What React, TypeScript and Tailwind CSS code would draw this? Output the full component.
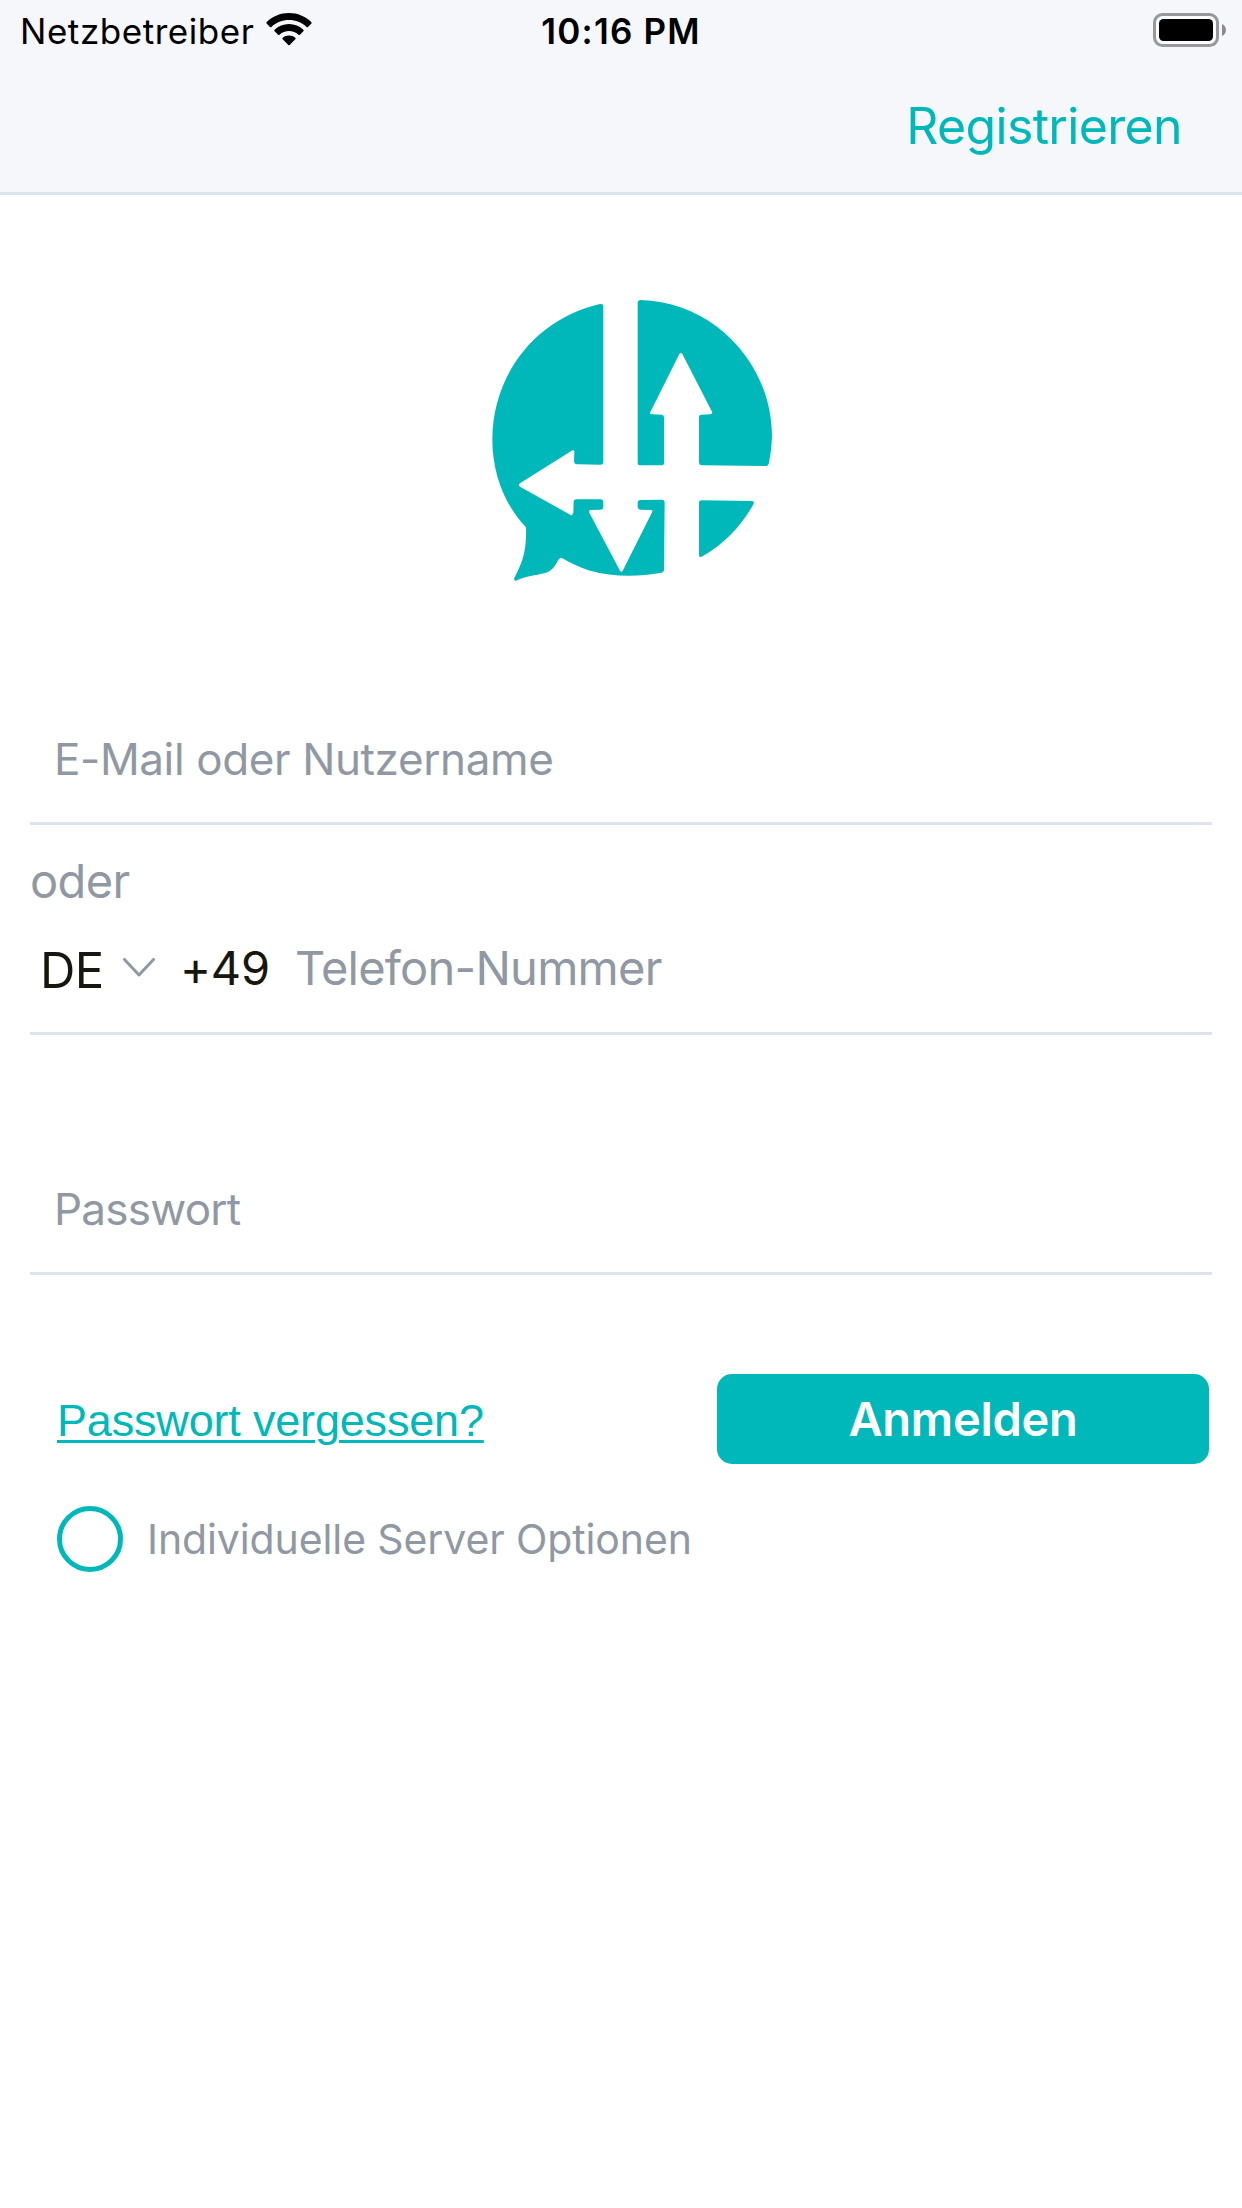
function WifiIcon() {
  return (
    <svg viewBox="0 0 46 33" className="h-[33px] w-[46px]" fill="#000">
      <path d="M23 0C31.6 0 39.6 3.3 45.4 9.2Q46 9.900 45.4 10.5L42 14Q41.300 14.600 40.600 14C35.800 9.600 29.700 7.100 23 7.100S10.200 9.600 5.400 14Q4.700 14.600 4 14L0.6 10.500Q0 9.900 0.6 9.200C6.400 3.300 14.400 0 23 0Z" />
      <path d="M23 11C28.600 11 33.600 13.100 37.400 16.800Q38.100 17.500 37.400 18.200L33.900 21.800Q33.200 22.400 32.500 21.800C29.800 19.400 26.600 18.100 23 18.100S16.200 19.400 13.500 21.800Q12.800 22.400 12.100 21.800L8.600 18.200Q7.900 17.500 8.600 16.800C12.400 13.100 17.400 11 23 11Z" />
      <path d="M23 22.500C25.500 22.500 27.600 23.300 29.300 24.800Q30 25.500 29.300 26.200L23.700 31.900Q23 32.600 22.300 31.900L16.700 26.200Q16 25.500 16.700 24.800C18.400 23.300 20.500 22.500 23 22.500Z" />
    </svg>
  );
}

function BatteryIcon() {
  return (
    <svg viewBox="0 0 74 34" className="h-[34px] w-[74px]">
      <rect x="1.500" y="1.500" width="63" height="31" rx="8" fill="#fafbfd" stroke="#98989b" strokeWidth="3" />
      <rect x="6" y="6" width="54" height="22" rx="4.500" fill="#000" />
      <path d="M69 11C74.300 13 74.300 21 69 23Z" fill="#8c8c8f" />
    </svg>
  );
}

function Logo() {
  return (
    <svg viewBox="0 0 900 900" className="h-[300px] w-[300px]" fill="#00b8ba">
      <path d="M360 42Q370 40 370 50V515Q370 524 361 524L290 523Q282 522 282 513L283 484Q281 479 275 482L120 580Q114 585 120 590L272 675Q280 678 280 667L281 634Q282 628 289 628L362 628Q370 629 370 637V650Q370 659 361 659L331 660Q325 661 328 668L420 842Q424 848 428 842L517 665Q519 660 511 660L482 659Q473 658 473 650V636Q474 630 482 630L546 629Q554 630 554 638L552 840Q552 847 544 848C470 862 395 860 330 842C298 832 272 819 247 805Q241 802 237 807C228 820 220 844 193 850C165 857 140 858 108 872Q101 873 103 864C122 825 140 795 138 715Q138 711 134 707C80 650 37 560 37 448C38 250 170 85 360 42Z" />
      <path d="M473 38Q473 30 482 30C700 35 876 220 876 440Q875 480 867 518Q865 528 856 528L664 526Q657 525 657 518V381Q657 374 665 374L690 373Q699 372 696 365L607 192Q603 186 598 192L511 366Q508 372 516 373L545 374Q552 375 552 382V518Q552 526 544 526H482Q473 526 473 518Z" />
      <path d="M657 638Q657 631 665 631L816 633Q824 634 821 641C785 707 730 765 665 800Q657 803 657 795Z" />
    </svg>
  );
}

export default function App() {
  return (
    <div className="flex h-[2208px] w-[1242px] flex-col overflow-hidden bg-white font-['Inter','Liberation_Sans',sans-serif] whitespace-nowrap">
      <header className="border-b-[3px] border-[#dde4ee] bg-[#f6f7fb]">
        <div className="grid h-[63px] grid-cols-3 items-center text-[35px] leading-[63px] text-black">
          <div className="flex items-center gap-[12px] pl-[20px]">
            <span className="tracking-[0.55px]">Netzbetreiber</span>
            <div className="pb-[4px]">
              <WifiIcon />
            </div>
          </div>
          <span className="text-center font-semibold tracking-[1.2px]">10:16 PM</span>
          <div className="flex justify-end pr-[15px] pb-[3px]">
            <BatteryIcon />
          </div>
        </div>
        <nav className="flex h-[129px] items-center justify-end pr-[60px] pb-[3px]">
          <a className="text-[50px] leading-[60px] tracking-[-0.65px] text-[#00b8ba]">Registrieren</a>
        </nav>
      </header>

      <main className="flex flex-col pr-[30px] pl-[30px]">
        <div className="mt-[95px] flex pl-[450px]">
          <Logo />
        </div>

        <div className="mt-[106px] flex h-[129px] items-center border-b-[3px] border-[#dde4ef] pl-[24px] text-[44px] tracking-[-0.38px] text-[#9098a4]">
          E-Mail oder Nutzername
        </div>

        <div className="flex h-[112px] items-center text-[47px] tracking-[-0.65px] text-[#9098a4]">oder</div>

        <div className="flex h-[98px] items-start border-b-[3px] border-[#dde4ef] text-[47px] leading-[62px]">
          <span className="w-[93px] pt-[3px] pl-[10px] text-[49px] tracking-[-0.66px] text-[#17170f]">DE</span>
          <svg viewBox="0 0 32 19" className="mt-[21px] h-[19px] w-[32px]" fill="none" stroke="#9098a4" strokeWidth="3" strokeLinecap="round" strokeLinejoin="round">
            <path d="M1.500 1.500L16 17L30.500 1.500" />
          </svg>
          <span className="w-[114px] pl-[25px] tracking-[-0.28px] text-[#17170f]">+49</span>
          <span className="pl-[26px] tracking-[-0.75px] text-[#9098a4]">Telefon-Nummer</span>
        </div>

        <div className="mt-[111px] flex h-[129px] items-center border-b-[3px] border-[#dde4ef] pl-[24px] text-[44px] tracking-[-0.75px] text-[#9098a4]">
          Passwort
        </div>

        <div className="mt-[99px] flex h-[90px] items-center justify-between pr-[3px] pl-[27px]">
          <a className="pt-[3px] font-['Liberation_Sans',sans-serif] text-[45px] tracking-[-0.18px] text-[#00b8ba] underline decoration-[3px] underline-offset-[4px]">
            Passwort vergessen?
          </a>
          <button className="h-[90px] w-[492px] rounded-[15px] bg-[#00b8ba] text-[47px] font-semibold tracking-[-0.25px] text-white">
            Anmelden
          </button>
        </div>

        <label className="mt-[42px] flex h-[66px] items-center gap-[24px] pl-[27px]">
          <span className="h-[66px] w-[66px] rounded-full border-[5px] border-[#00b8ba]" />
          <span className="pt-[2px] text-[41px] tracking-[-0.11px] text-[#9098a4]">Individuelle Server Optionen</span>
        </label>
      </main>
    </div>
  );
}
